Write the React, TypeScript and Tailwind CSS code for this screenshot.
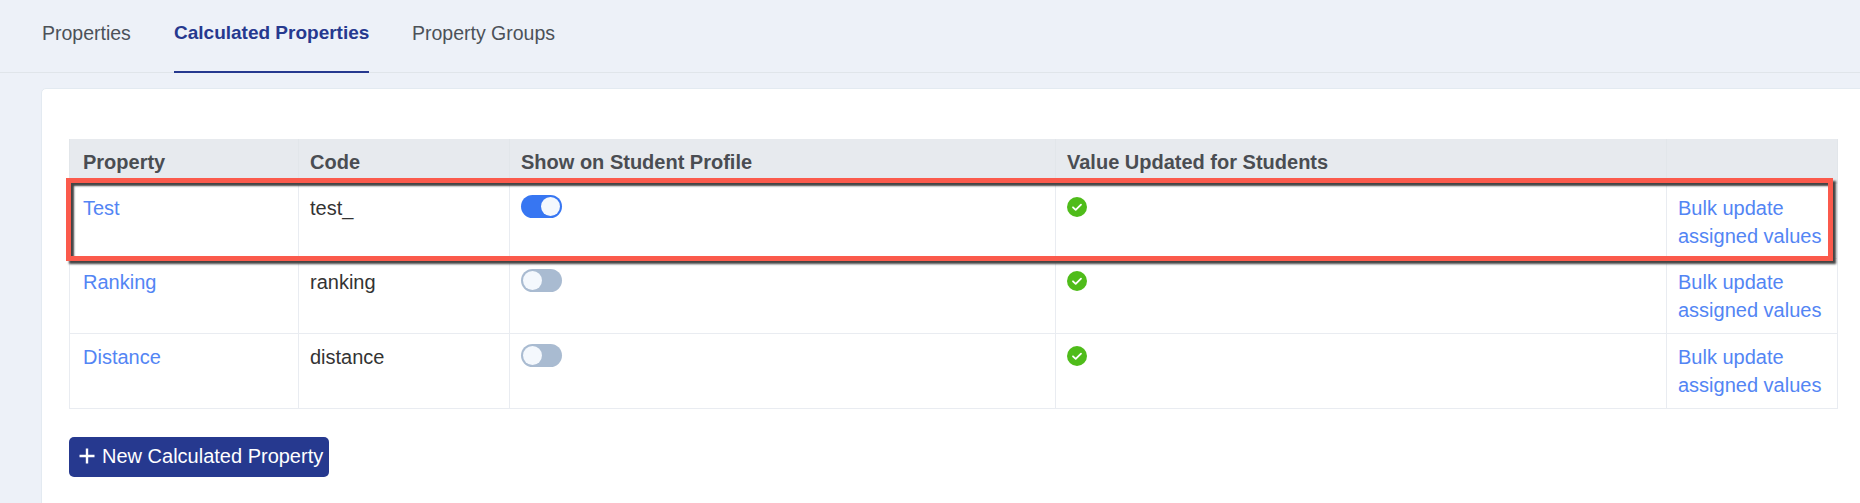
import React from "react";

const rows = [
  { name: "Test", code: "test_", on: true },
  { name: "Ranking", code: "ranking", on: false },
  { name: "Distance", code: "distance", on: false },
];

function Toggle({ on }: { on: boolean }) {
  return (
    <div
      className={`w-[41px] h-[23px] rounded-full p-[2px] flex ${on ? "bg-[#3776f2] justify-end" : "bg-[#a9bbd1] justify-start"}`}
    >
      <div className="w-[19px] h-[19px] rounded-full bg-[#f4f8fd]" />
    </div>
  );
}

function Check() {
  return (
    <svg width="20" height="20" viewBox="0 0 20 20" className="block">
      <circle cx="10" cy="10" r="10" fill="#4fbc1a" />
      <path d="M6 10.3l2.7 2.6L14 7.6" fill="none" stroke="#fff" strokeWidth="1.8" strokeLinecap="round" strokeLinejoin="round" />
    </svg>
  );
}

export default function App() {
  return (
    <div className="w-[1860px] h-[503px] overflow-hidden bg-[#edf1f8] font-['Liberation_Sans',sans-serif] text-[20px]">
      <nav className="h-[73px] border-b border-[#e0e5ea] flex pl-[42px] text-[19.5px] text-[#4c5158]">
        <a className="pt-[19px] h-[73px] w-[132px]">Properties</a>
        <a className="pt-[19px] h-[73px] w-[195px] text-[19px] font-bold text-[#26398f] border-b-2 border-[#26398f] whitespace-nowrap">Calculated Properties</a>
        <a className="pt-[19px] h-[73px] ml-[43px]">Property Groups</a>
      </nav>
      <div className="ml-[41px] mt-[15px] w-[1900px] h-[500px] bg-white border border-[#e3eaf1] rounded-[5px] pl-[27px] pt-[50px]">
        <div className="relative w-[1768px]">
          <table className="table-fixed border-collapse w-[1768px]">
            <colgroup>
              <col className="w-[229px]" />
              <col className="w-[211px]" />
              <col className="w-[546px]" />
              <col className="w-[611px]" />
              <col className="w-[171px]" />
            </colgroup>
            <thead>
              <tr className="h-[44px] bg-[#e7eaee] text-left text-[#4a4d52] font-bold">
                {["Property", "Code", "Show on Student Profile", "Value Updated for Students", ""].map((h, i) => (
                  <th key={i} className={`border-x border-[#e2e6ea] ${i === 0 ? "pl-[13px]" : "pl-[11px]"} pr-0 pt-[3px] font-bold align-middle whitespace-nowrap`}>{h}</th>
                ))}
              </tr>
            </thead>
            <tbody>
              {rows.map((r, i) => {
                const text = i === 0 ? "pt-[10px]" : "pt-[9px]";
                return (
                  <tr key={r.name} className="h-[75px] text-[#333]">
                    <td className={`border border-[#e9ecf1] pl-[13px] ${text} align-top text-[#5385f4] leading-[28px]`}>{r.name}</td>
                    <td className={`border border-[#e9ecf1] pl-[11px] ${text} align-top leading-[28px]`}>{r.code}</td>
                    <td className={`border border-[#e9ecf1] pl-[11px] ${i === 0 ? "pt-[11px]" : "pt-[10px]"} align-top`}><Toggle on={r.on} /></td>
                    <td className={`border border-[#e9ecf1] pl-[11px] ${i === 0 ? "pt-[13px]" : "pt-[12px]"} align-top`}><Check /></td>
                    <td className={`border border-[#e9ecf1] pl-[11px] ${text} align-top text-[#5385f4] leading-[28px] whitespace-nowrap`}>Bulk update<br />assigned values</td>
                  </tr>
                );
              })}
            </tbody>
          </table>
          <div className="absolute left-[-3px] top-[39px] w-[1767px] h-[83px] border-[5px] border-[#fb5a4c] shadow-[3px_3px_2px_#444,inset_3px_3px_2px_#444] pointer-events-none" />
        </div>
        <button className="mt-[28px] h-[40px] w-[260px] rounded-[5px] bg-[#26398f] text-white text-[20px] flex items-center pl-[10px] gap-[7px] pb-[1px] whitespace-nowrap">
          <svg width="16" height="16" viewBox="0 0 16 16"><path d="M8 0.5v15M0.5 8h15" stroke="#fff" strokeWidth="2.4" /></svg>
          New Calculated Property
        </button>
      </div>
    </div>
  );
}
